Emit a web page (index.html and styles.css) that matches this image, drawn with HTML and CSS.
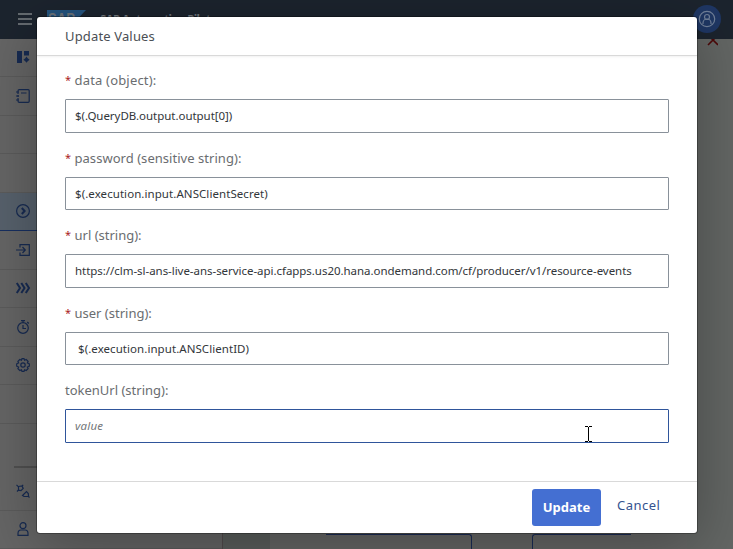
FILE: index.html
```html
<!DOCTYPE html>
<html lang="en">
<head>
<meta charset="utf-8">
<title>SAP Automation Pilot</title>
<link rel="stylesheet" href="styles.css">
</head>
<body>
<div class="app">
  <header class="shell">
    <svg class="burger" width="14" height="12" viewBox="0 0 14 12"><path d="M0 1h14M0 6h14M0 11h14" stroke="#7d8286" stroke-width="1.5"/></svg>
    <svg class="logo" width="39" height="20" viewBox="0 0 39 20"><path d="M0 0h39L20 20H0z" fill="#24537e"/><text x="1" y="14.500" class="logo-text" textLength="27" lengthAdjust="spacingAndGlyphs">SAP</text></svg>
    <span class="product">SAP Automation Pilot</span>
    <span class="avatar"><svg width="18" height="18" viewBox="0 0 18 18" fill="none" stroke="#718099" stroke-width="1.2"><circle cx="9" cy="9" r="7.7"/><circle cx="9" cy="7" r="2.5"/><path d="M5 14v-1a4 4 0 0 1 8 0v1"/></svg></span>
  </header>
  <div class="main">
    <nav class="side">
      <div class="item"><svg viewBox="0 0 14 14"><path class="solid" d="M1 1h5v12H1zM8 1h5v4.500H8zM10.500 6.500l1.200 1.700 1.900 1.500-1.900 1.500-1.200 1.600-1.200-1.600-1.900-1.500 1.900-1.500z"/></svg></div>
      <div class="item low"><svg viewBox="0 0 14 14"><path d="M2 5V2q0-1.300 1.300-1.300h8.900q1 0 1 1v10.600q0 1-1 1H3.300Q2 13.300 2 12V9M2 6v2M0 3h3M0 7h3M0 11h3M5 4h5.500"/></svg></div>
      <div class="item"></div>
      <div class="item"></div>
      <div class="item current"><svg viewBox="0 0 14 14"><circle cx="7" cy="7" r="6.400"/><path class="bold" d="M5.800 4l2.800 3-2.800 3"/></svg></div>
      <div class="item low"><svg viewBox="0 0 14 14"><path d="M4 4.500V1.700h9.300v10.600H4V9.500M0 7h9M6.500 4L9.300 7l-2.800 3"/></svg></div>
      <div class="item"><svg viewBox="0 0 14 14"><path class="bold" d="M.8 2l3.200 5-3.200 5M5.300 2l3.200 5-3.200 5M9.800 2L13 7l-3.200 5"/></svg></div>
      <div class="item low"><svg viewBox="0 0 14 14"><circle cx="7" cy="8" r="5.300"/><path d="M5 .6h4M7 .6v2M11.300 2l1.500 1.500M7 5v3.500h3"/></svg></div>
      <div class="item"><svg viewBox="0 0 14 14"><path d="M5.400 2.200L6 .7h2l.6 1.500 1.600-.7 1.900 1.800-.7 1.700 1.900.8v2.400l-1.900.8.7 1.700-1.900 1.800-1.600-.7-.6 1.600H6l-.6-1.600-1.600.7-1.900-1.800L2.600 9 .7 8.200V5.800L2.600 5l-.7-1.700 1.900-1.800z"/><circle cx="7" cy="7" r="2.200"/></svg></div>
      <div class="item"></div>
      <div class="item plain"></div>
      <div class="item tool"><svg viewBox="0 0 14 14"><path d="M.5.800L2.300 2.600M2.500 2.500L6 2l1.200 2.500L5 6.700l-2.500-.5zM5.500 2.500l1.700-1.700M2.500 6L1 7.500M6.500 11.500L10.500 7.500l1.800 2 .2 3H8zM12.300 12.300l1.200 1.200"/></svg></div>
      <div class="item"><svg viewBox="0 0 14 14"><circle cx="7" cy="3.700" r="3"/><path d="M2 13.400v-1.900Q2 8 5 8h4q3 0 3 3.500v1.900z"/></svg></div>
    </nav>
    <div class="list"></div>
    <div class="gutter"></div>
    <div class="canvas">
      <div class="node first"></div>
      <div class="node second"></div>
    </div>
    <div class="edge"><svg width="11" height="10" viewBox="0 0 11 10"><path d="M1-4l10 10M11-4L1 6" stroke="#4d0808" stroke-width="1.600"/></svg></div>
  </div>
</div>

<div class="overlay">
  <section class="dialog">
    <h1 class="title"><span>Update Values</span></h1>
    <form class="fields">
      <div class="field"><label><b>*</b><span class="l1">data (object):</span></label><div class="input"><span class="v1">$(.QueryDB.output.output[0])</span></div></div>
      <div class="field"><label><b>*</b><span class="l2">password (sensitive string):</span></label><div class="input"><span class="v2">$(.execution.input.ANSClientSecret)</span></div></div>
      <div class="field"><label><b>*</b><span class="l3">url (string):</span></label><div class="input"><span class="v3">https://clm-sl-ans-live-ans-service-api.cfapps.us20.hana.ondemand.com/cf/producer/v1/resource-events</span></div></div>
      <div class="field"><label><b>*</b><span class="l4">user (string):</span></label><div class="input"><span class="v4">&nbsp;$(.execution.input.ANSClientID)</span></div></div>
      <div class="field"><label><span class="l5">tokenUrl (string):</span></label><div class="input focus"><span class="placeholder">value</span></div></div>
    </form>
    <footer class="actions">
      <span class="update">Update</span>
      <span class="cancel">Cancel</span>
    </footer>
  </section>
</div>
<svg class="cursor" width="7" height="16" viewBox="0 0 7 16"><path d="M0 .5h3M4 .5h3M3.500 1v14M0 15.500h3M4 15.500h3" stroke="#000" fill="none"/></svg>
</body>
</html>
```
FILE: styles.css
```css
* { box-sizing: border-box; }
body { margin: 0; width: 733px; height: 549px; overflow: hidden; font-family: "Noto Sans", sans-serif; }
.app { height: 549px; display: flex; flex-direction: column; background: #626362; }
.shell { height: 39px; flex: none; display: flex; align-items: flex-start; background: #1c242e; padding-left: 18px; }
.burger { margin-top: 13px; }
.logo { margin: 10px 0 0 15px; }
.logo-text { font: bold 16px "Liberation Sans", sans-serif; fill: #6c7278; }
.product { margin: 9.500px 0 0 14px; font-size: 11.500px; line-height: 20px; font-weight: 700; letter-spacing: -.6px; color: #74797e; white-space: nowrap; }
.avatar { width: 28px; height: 28px; margin: 5px 12px 0 auto; border-radius: 50%; background: #1f3764; display: flex; align-items: center; justify-content: center; }
.main { flex: 1; min-height: 0; display: flex; }
.side { width: 223px; border-right: 1px solid #514b4c; background: #656565; }
.item { height: 38.5px; padding: 11px 0 0 16px; border-bottom: 1px solid #5b5b5b; }
.item:first-child { height: 38px; }
.item.low { padding-top: 12px; }
.item svg { display: block; width: 14px; height: 14px; fill: none; stroke: #172b52; stroke-width: 1.200; overflow: visible; }
.item .solid { fill: #172b52; stroke: none; }
.item .bold { stroke-width: 2; }
.item.current { background: #57616c; border-bottom: 1px solid #172f60; }
.item.plain { height: 44px; border-bottom: 2px solid #505050; margin-left: 14px; }
.item.tool { height: 43px; padding-top: 16px; }
.list { width: 47px; background: #5a5e5c; }
.gutter { width: 56px; background: #656665; }
.canvas { flex: 1; display: flex; align-items: flex-end; background: #656665; }
.node { height: 15px; border: 1px solid #1a2c55; border-bottom: 0; }
.node.first { width: 146px; border-left: 0; border-top-right-radius: 3px; }
.node.second { width: 99px; margin-left: 60px; border-right: 0; border-top-left-radius: 3px; }
.edge { width: 46px; background: #636664; padding: 0 0 0 20px; }
.edge svg { display: block; }
.overlay { position: absolute; inset: 0; display: flex; padding: 17px 36px 16px 37px; overflow: hidden; }
.dialog { flex: 1; display: flex; flex-direction: column; background: #fff; border-radius: 3px; box-shadow: 0 0 0 1px rgba(0,0,0,.28), 0 12px 60px rgba(0,0,0,.3); color: #32363a; }
.title { margin: 0; height: 39px; padding-left: 28px; border-bottom: 1px solid #d9d9d9; box-shadow: 0 1px 2px rgba(0,0,0,.06); font-size: 13px; font-weight: 400; line-height: 38px; letter-spacing: .15px; color: #4b4f54; }
.fields { flex: 1; margin: 0; padding: 10px 28px 0; }
.field { height: 77.5px; }
label { display: flex; height: 33px; line-height: 28px; font-size: 13px; color: #6a6d70; white-space: nowrap; }
label b { width: 9.500px; font-size: 11px; font-weight: 400; color: #a22; }
.l1 { letter-spacing: .18px; }
.l2 { letter-spacing: .04px; }
.input { height: 33.9px; border: 1px solid #89919a; border-radius: 1px; padding-left: 9px; font-size: 11.500px; line-height: 32px; white-space: nowrap; }
.v1 { letter-spacing: -.04px; }
.v2 { letter-spacing: .07px; }
.v3 { letter-spacing: -.04px; }
.v4 { letter-spacing: .06px; }
.input.focus { border-color: #2f559b; }
.placeholder { font-style: italic; letter-spacing: .2px; color: #74777a; }
.actions { height: 52px; border-top: 1px solid #d9d9d9; display: flex; align-items: flex-start; padding: 7px 0 0 495px; }
.update { width: 69px; height: 37px; border-radius: 3px; background: #446fd2; color: #fff; font-size: 13px; font-weight: 700; line-height: 36px; text-align: center; }
.cancel { margin-left: 16px; font-size: 13px; line-height: 33px; letter-spacing: .5px; color: #35538f; }
.cursor { position: absolute; left: 585px; top: 426px; }
```
